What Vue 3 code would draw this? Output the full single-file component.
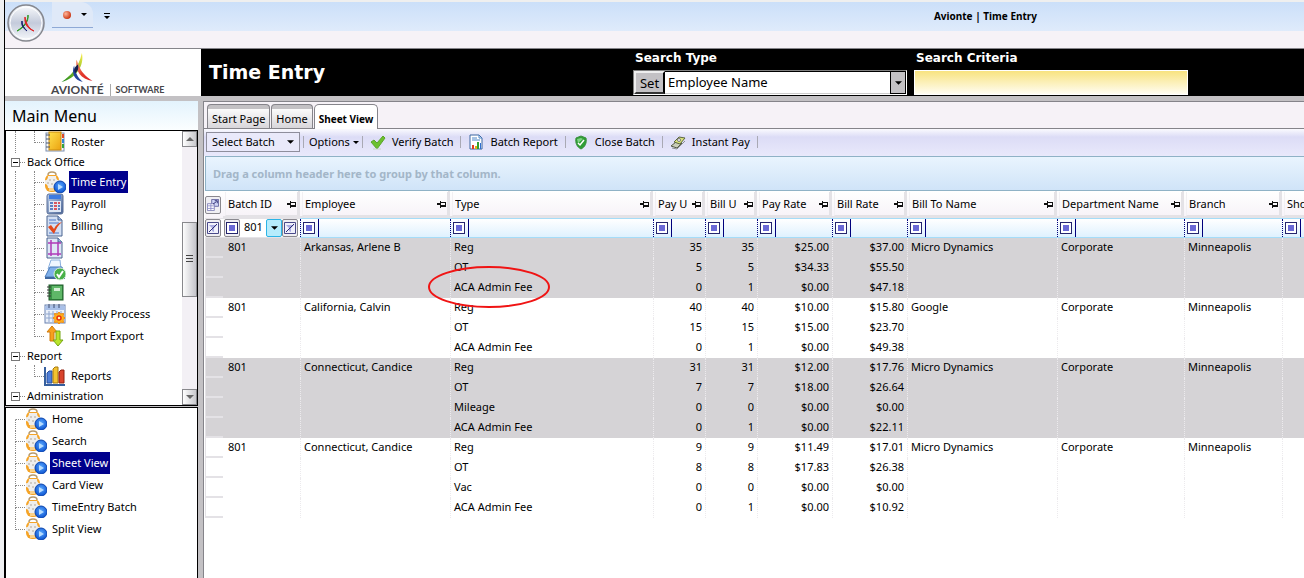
<script setup>
import { ref } from 'vue'

const batchFilter = ref('801')
const searchType = ref('Employee Name')
const criteria = ref('')

const groups = [
  { items: [{ icon: 'roster', label: 'Roster' }] },
  {
    title: 'Back Office',
    items: [
      { icon: 'entry', label: 'Time Entry', active: true },
      { icon: 'payroll', label: 'Payroll' },
      { icon: 'billing', label: 'Billing' },
      { icon: 'invoice', label: 'Invoice' },
      { icon: 'paycheck', label: 'Paycheck' },
      { icon: 'ar', label: 'AR' },
      { icon: 'weekly', label: 'Weekly Process' },
      { icon: 'transfer', label: 'Import Export' }
    ]
  },
  { title: 'Report', items: [{ icon: 'reports', label: 'Reports' }] },
  { title: 'Administration', items: [] }
]

const views = ['Home', 'Search', 'Sheet View', 'Card View', 'TimeEntry Batch', 'Split View']
const tabs = ['Start Page', 'Home', 'Sheet View']

const tools = [
  { icon: 'check', label: 'Verify Batch' },
  { icon: 'chart', label: 'Batch Report' },
  { icon: 'shield', label: 'Close Batch' },
  { icon: 'money', label: 'Instant Pay' }
]

const columns = [
  { key: 'batch', label: 'Batch ID', width: 77 },
  { key: 'employee', label: 'Employee', width: 150 },
  { key: 'type', label: 'Type', width: 203 },
  { key: 'payU', label: 'Pay U', width: 52, num: true },
  { key: 'billU', label: 'Bill U', width: 52, num: true },
  { key: 'payRate', label: 'Pay Rate', width: 75, num: true },
  { key: 'billRate', label: 'Bill Rate', width: 75, num: true },
  { key: 'billTo', label: 'Bill To Name', width: 150 },
  { key: 'dept', label: 'Department Name', width: 127 },
  { key: 'branch', label: 'Branch', width: 98 },
  { key: 'sho', label: 'Sho', width: 75 }
]

const batches = [
  {
    employee: 'Arkansas, Arlene B',
    billTo: 'Micro Dynamics',
    lines: [
      ['Reg', 35, 35, '$25.00', '$37.00'],
      ['OT', 5, 5, '$34.33', '$55.50'],
      ['ACA Admin Fee', 0, 1, '$0.00', '$47.18', true]
    ]
  },
  {
    employee: 'California, Calvin',
    billTo: 'Google',
    lines: [
      ['Reg', 40, 40, '$10.00', '$15.80'],
      ['OT', 15, 15, '$15.00', '$23.70'],
      ['ACA Admin Fee', 0, 1, '$0.00', '$49.38']
    ]
  },
  {
    employee: 'Connecticut, Candice',
    billTo: 'Micro Dynamics',
    lines: [
      ['Reg', 31, 31, '$12.00', '$17.76'],
      ['OT', 7, 7, '$18.00', '$26.64'],
      ['Mileage', 0, 0, '$0.00', '$0.00'],
      ['ACA Admin Fee', 0, 1, '$0.00', '$22.11']
    ]
  },
  {
    employee: 'Connecticut, Candice',
    billTo: 'Micro Dynamics',
    lines: [
      ['Reg', 9, 9, '$11.49', '$17.01'],
      ['OT', 8, 8, '$17.83', '$26.38'],
      ['Vac', 0, 0, '$0.00', '$0.00'],
      ['ACA Admin Fee', 0, 1, '$0.00', '$10.92']
    ]
  }
]

// one table row per pay line, the batch data only stands on the first one
const rows = batches.flatMap((b, bi) =>
  b.lines.map((l, li) => ({
    shaded: bi % 2 === 0,
    circled: l[5],
    batch: li ? '' : '801',
    employee: li ? '' : b.employee,
    type: l[0],
    payU: l[1],
    billU: l[2],
    payRate: l[3],
    billRate: l[4],
    billTo: li ? '' : b.billTo,
    dept: li ? '' : 'Corporate',
    branch: li ? '' : 'Minneapolis'
  }))
)
</script>

<template>
  <svg class="sprite" aria-hidden="true">
    <defs>
      <linearGradient id="gGreen" x1="0" y1="1" x2="1" y2="0">
        <stop offset="0" stop-color="#1d8a1d" /><stop offset=".55" stop-color="#7db928" /><stop offset="1" stop-color="#fff04a" />
      </linearGradient>
      <linearGradient id="gRed" x1="0" y1="0" x2="1" y2="1">
        <stop offset="0" stop-color="#f7b090" /><stop offset=".5" stop-color="#e43a2c" /><stop offset="1" stop-color="#d81e28" />
      </linearGradient>
      <linearGradient id="gSteel" x1="0" y1="0" x2="1" y2="1">
        <stop offset="0" stop-color="#b9cdea" /><stop offset="1" stop-color="#4a6596" />
      </linearGradient>
      <linearGradient id="gGold" x1="0" y1="0" x2="1" y2="1">
        <stop offset="0" stop-color="#ffe14d" /><stop offset="1" stop-color="#eba210" />
      </linearGradient>
      <radialGradient id="gBlue" cx=".5" cy=".4" r=".6">
        <stop offset="0" stop-color="#58a8ff" /><stop offset="1" stop-color="#0a50cf" />
      </radialGradient>
      <radialGradient id="gBall" cx=".35" cy=".35" r=".7">
        <stop offset="0" stop-color="#ffb59a" /><stop offset="1" stop-color="#c8300c" />
      </radialGradient>
      <linearGradient id="gOrb" x1="0" y1="0" x2="0" y2="1">
        <stop offset="0" stop-color="#fafbfd" /><stop offset=".5" stop-color="#c4cbdb" /><stop offset="1" stop-color="#f8fafd" />
      </linearGradient>
    </defs>
    <symbol id="i-logo" viewBox="0 0 32 32">
      <path d="M0 31C9 25 18 16 21 1C24 14 15 27 0 31Z" fill="url(#gGreen)" />
      <path d="M15 8C19 12 16 19 32 30C20 28 14 20 15 8Z" fill="url(#gRed)" />
      <path d="M13 14C14 20 16 26 22 31C13 29 10 22 13 14Z" fill="#24449c" />
      <path d="M17 13C18 17 17 20 14 22C12 18 14 15 17 13Z" fill="#14204c" />
    </symbol>
    <symbol id="i-entry" viewBox="0 0 22 22">
      <rect x="1" y="3" width="14" height="18" rx="6" fill="#f5a427" />
      <path d="M4 4c0-4 8-4 8 0" fill="#fff" stroke="#b79a6c" stroke-width="1.500" />
      <path d="M1 9c2 1 3-2 3-4h8c0 2 1 5 3 4v4c-2 0-3 2-3 4H4c0-2-1-4-3-4Z" fill="#efeeec" />
      <path d="M5 8h2v2H5zM9 8h2v2H9zM3 11h2v2H3zM7 12h2v2H7z" fill="#cfcbc4" />
      <path d="M5 17h5v3H5z" fill="#fbd28a" />
      <circle cx="16" cy="16" r="6" fill="url(#gBlue)" stroke="#0b45ad" />
      <path d="M14 13l5 3-5 3Z" fill="#b8ddff" />
    </symbol>
    <symbol id="i-roster" viewBox="0 0 22 22">
      <rect x="2" y="2" width="18" height="18" fill="#f7f8fb" stroke="#7d8fb0" />
      <rect x="5" y="1" width="12" height="18" fill="url(#gGold)" stroke="#c98a10" />
      <path d="M18 3h2v4h-2z" fill="#e04a2a" /><path d="M18 8h2v4h-2z" fill="#2f86d8" /><path d="M18 13h2v4h-2z" fill="#34a53c" />
      <path d="M2 4h4M2 8h4M2 12h4M2 16h4" stroke="#4b5568" />
    </symbol>
    <symbol id="i-payroll" viewBox="0 0 22 22">
      <rect x="3" y="1" width="16" height="20" rx="2" fill="url(#gSteel)" stroke="#5a6f98" />
      <rect x="5" y="2" width="12" height="4" fill="#3f7be0" />
      <rect x="5" y="8" width="12" height="11" fill="#dfe7f4" />
      <path d="M6 9h3v2H6zM6 12h3v2H6zM6 15h3v2H6z" fill="#5c7fc0" />
      <path d="M10 9h3v2h-3zM10 12h3v2h-3zM10 15h3v2h-3zM14 9h2v2h-2z" fill="#d8575e" />
      <path d="M14 12h2v2h-2zM14 15h2v2h-2z" fill="#5c7fc0" />
    </symbol>
    <symbol id="i-billing" viewBox="0 0 22 22">
      <path d="M3 1h11l4 4v16H3Z" fill="#d3dff3" stroke="#4a6490" />
      <path d="M14 1v4h4" fill="#9db7e2" stroke="#4a6490" />
      <path d="M5 5h7M5 8h10M5 18h10" stroke="#4c79c8" />
      <path d="M4 12l3-2 3 4c2-4 4-6 8-7-4 3-6 7-8 12Z" fill="#e2491c" />
    </symbol>
    <symbol id="i-invoice" viewBox="0 0 22 22">
      <path d="M3 1h11l4 4v16H3Z" fill="#dfe7f6" stroke="#4a6490" />
      <path d="M14 1v4h4" fill="#9db7e2" stroke="#4a6490" />
      <path d="M7 3v16M14 5v14M4 6h13M4 17h13" stroke="#b03ab8" fill="none" stroke-width="1.500" />
    </symbol>
    <symbol id="i-paycheck" viewBox="0 0 22 22">
      <path d="M7 1h9l1 9H4Z" fill="#eef6ff" stroke="#8ab0de" />
      <path d="M1 18l5-10h12l3 10Z" fill="#7fb0ea" stroke="#4878b8" />
      <path d="M1 18h20v2H1z" fill="#3e679e" />
      <circle cx="16" cy="15" r="6" fill="#48b048" stroke="#d8efd8" />
      <path d="M13 15l2 3 4-6" fill="none" stroke="#fff" stroke-width="2" />
    </symbol>
    <symbol id="i-ar" viewBox="0 0 22 22">
      <rect x="5" y="4" width="14" height="15" fill="#3b9447" stroke="#1c5a28" />
      <rect x="8" y="5" width="10" height="13" fill="#5fb768" />
      <rect x="10" y="7" width="6" height="3" fill="#d5efd5" />
      <path d="M3 6h4M3 9h4M3 12h4M3 15h4" stroke="#3a3a3a" />
    </symbol>
    <symbol id="i-weekly" viewBox="0 0 22 22">
      <rect x="1" y="2" width="20" height="18" fill="#eaf0fa" stroke="#6a82b0" />
      <path d="M1 3h20v4H1z" fill="#a9c0e8" />
      <path d="M5 8v11M9 8v11M13 8v11M17 8v11M2 11h18M2 15h18" stroke="#8fa5cc" />
      <path d="M5 1v4M10 1v4M15 1v4" stroke="#3c4d70" />
      <path d="M15 9l1.500 2 3-.5-.5 3 2 1.500-2 1.500.5 3-3-.5-1.500 2-1.500-2-3 .5.500-3-2-1.500 2-1.500-.5-3 3 .5Z" fill="#ffb61c" stroke="#f08a10" />
      <circle cx="15" cy="15" r="2" fill="#fff3c0" stroke="#e83010" stroke-width="1.500" />
    </symbol>
    <symbol id="i-transfer" viewBox="0 0 22 22">
      <path d="M8 1l5 6h-3v9H6V7H3Z" fill="#f7a01e" stroke="#cf7a0c" />
      <path d="M14 21l-5-6h3V6h4v9h3Z" fill="#b9e42c" stroke="#74a512" />
    </symbol>
    <symbol id="i-reports" viewBox="0 0 22 22">
      <path d="M1 2v18h20" fill="none" stroke="#355f9e" stroke-width="2" />
      <path d="M3 8l2-2h3v12H3Z" fill="#4f7fd8" stroke="#274f9c" />
      <path d="M9 4l2-2h3v16H9Z" fill="#f3c231" stroke="#a87a0c" />
      <path d="M15 7l2-2h3v13h-5Z" fill="#d9432c" stroke="#8f2010" />
    </symbol>
    <symbol id="i-check" viewBox="0 0 16 16">
      <path d="M1 8l3-2 3 3 6-7 2 2-8 11Z" fill="#6cc12e" stroke="#5ba42c" />
      <path d="M3 15h8" stroke="#c9d6c4" />
    </symbol>
    <symbol id="i-chart" viewBox="0 0 16 16">
      <path d="M2 1h9l3 3v11H2Z" fill="#fff" stroke="#3c66a0" />
      <path d="M11 1v3h3M4 4h5M4 6h8" stroke="#4d86c8" fill="none" />
      <path d="M4 11h2v4H4z" fill="#e03a20" /><path d="M7 12h2v3H7z" fill="#e0b010" /><path d="M9 8h2v7H9z" fill="#2ea02e" /><path d="M12 9h1v6h-1z" fill="#2f6fd0" />
    </symbol>
    <symbol id="i-shield" viewBox="0 0 16 16">
      <path d="M3 4l5-2 5 2c1 5-1 9-5 11C4 13 2 9 3 4Z" fill="#2f9e35" stroke="#3a8f3e" />
      <path d="M4 5l4-1 2 1-5 4Z" fill="#7fd384" />
      <path d="M5 9l2 2 4-5" fill="none" stroke="#fff" stroke-width="1.500" />
    </symbol>
    <symbol id="i-money" viewBox="0 0 16 16">
      <path d="M1 12l5-4 6 1-5 5Z" fill="#c9cdb8" stroke="#545a48" />
      <path d="M4 8l5-5 6 1-5 6Z" fill="#d9e27a" stroke="#5c6640" />
      <circle cx="9" cy="6" r="1.500" fill="#fff" stroke="#777" />
      <path d="M2 14l5 1 8-8" fill="none" stroke="#8b9090" />
    </symbol>
    <symbol id="i-pin" viewBox="0 0 10 8">
      <path d="M0 3h3v2H0zM3 1h1v7H3zM4 2h5v1H4zM8 2h1v5H8zM4 5h5v2H4z" fill="#111" />
    </symbol>
    <symbol id="i-caret" viewBox="0 0 8 4"><path d="M0 0h8L4 4Z" fill="#000" /></symbol>
    <symbol id="i-nofilter" viewBox="0 0 12 12">
      <path d="M.5.5h11v11H.5z" fill="#f0f0fb" stroke="#4a4a8a" />
      <path d="M2 3h8L7 6v4L5 9V6Z" fill="#a9abe2" /><path d="M2 10L10 2" stroke="#2c2c74" />
    </symbol>
    <symbol id="i-chooser" viewBox="0 0 14 14">
      <path d="M5.500.5h8v8h-8z" fill="#cfd4f5" stroke="#5a5a98" /><path d="M.5 5.500h8v8h-8z" fill="#fff" stroke="#7a7ab4" />
      <path d="M1 8h7M1 11h7M4.500 6v7" stroke="#8a8ac8" /><path d="M7 6l4-3M9 2h3v3" stroke="#202068" fill="none" />
    </symbol>
  </svg>

  <div class="window">
    <header class="titlebar">
      <svg class="orb" viewBox="0 0 38 38">
        <circle cx="19" cy="19" r="18" fill="url(#gOrb)" stroke="#85878e" stroke-width="1.500" />
        <circle cx="19" cy="19" r="16" fill="none" stroke="#fff" />
        <path d="M10 27C16 23 21 18 21 11C22 17 17 24 10 27Z" fill="#2c9a24" stroke="#2c9a24" />
        <path d="M18 13C19 19 21 24 27 27C21 25 17 20 18 13Z" fill="#e02424" stroke="#e02424" />
        <path d="M15 17C15 21 17 24 20 27C16 24 14 21 15 17Z" fill="#15206e" stroke="#15206e" />
      </svg>
      <div class="quick">
        <svg class="ball" viewBox="0 0 8 8"><circle cx="4" cy="4" r="4" fill="url(#gBall)" /></svg>
        <svg class="mini"><use href="#i-caret" /></svg>
      </div>
      <svg class="more" viewBox="0 0 6 7"><path d="M0 0h6v1H0zM0 3h6L3 6Z" fill="#000" /></svg>
      <span class="caption">Avionte | Time Entry</span>
    </header>

    <div class="banner">
      <div class="brand">
        <svg class="mark"><use href="#i-logo" /></svg>
        <div class="names"><b>AVIONTÉ</b><small>SOFTWARE</small></div>
      </div>
      <div class="search">
        <h1>Time Entry</h1>
        <div class="field">
          <label for="stype">Search Type</label>
          <div class="combo">
            <button type="button" class="set">Set</button>
            <select id="stype" v-model="searchType"><option>Employee Name</option></select>
            <span class="drop"><svg><use href="#i-caret" /></svg></span>
          </div>
        </div>
        <div class="field">
          <label for="crit">Search Criteria</label>
          <input id="crit" v-model="criteria" class="crit" type="text">
        </div>
      </div>
    </div>

    <div class="body">
      <aside>
        <h2>Main Menu</h2>
        <div class="menu">
          <div class="tree">
            <template v-for="(g, gi) in groups" :key="gi">
              <div v-if="g.title" class="node"><i class="toggle"></i><i class="stub"></i>{{ g.title }}</div>
              <ul>
                <li v-for="item in g.items" :key="item.label">
                  <i class="trunk"></i><i class="branch"></i>
                  <svg class="icon"><use :href="'#i-' + item.icon" /></svg>
                  <a href="#" :class="{ active: item.active }">{{ item.label }}</a>
                </li>
              </ul>
            </template>
          </div>
          <div class="scroll">
            <button type="button" aria-label="Scroll up"><svg viewBox="0 0 8 4"><path d="M0 4h8L4 0Z" /></svg></button>
            <span class="thumb"></span>
            <button type="button" aria-label="Scroll down"><svg viewBox="0 0 8 4"><path d="M0 0h8L4 4Z" /></svg></button>
          </div>
        </div>
        <ul class="views">
          <li v-for="v in views" :key="v">
            <i class="branch"></i>
            <svg class="icon"><use href="#i-entry" /></svg>
            <a href="#" :class="{ active: v === 'Sheet View' }">{{ v }}</a>
          </li>
        </ul>
      </aside>

      <main>
        <nav class="tabs">
          <button v-for="t in tabs" :key="t" type="button" :class="{ current: t === 'Sheet View' }">{{ t }}</button>
        </nav>
        <div class="toolbar">
          <div class="picker">
            <select aria-label="Select Batch"><option>Select Batch</option></select>
            <svg><use href="#i-caret" /></svg>
          </div>
          <button type="button" class="options">Options <svg class="mini"><use href="#i-caret" /></svg></button>
          <button v-for="t in tools" :key="t.label" type="button">
            <svg class="tool"><use :href="'#i-' + t.icon" /></svg>{{ t.label }}
          </button>
        </div>
        <div class="groupby">Drag a column header here to group by that column.</div>

        <div class="sheet">
          <table>
            <colgroup>
              <col class="selector">
              <col v-for="c in columns" :key="c.key" :style="{ width: c.width + 'px' }">
            </colgroup>
            <thead>
              <tr class="heads">
                <th class="corner"><button type="button" class="tile" aria-label="Choose columns"><svg><use href="#i-chooser" /></svg></button></th>
                <th v-for="c in columns" :key="c.key">
                  <div class="head"><span>{{ c.label }}</span><svg v-if="c.key !== 'sho'"><use href="#i-pin" /></svg></div>
                </th>
              </tr>
              <tr class="filters">
                <td class="corner"><button type="button" class="tile" aria-label="Clear filters"><svg><use href="#i-nofilter" /></svg></button></td>
                <td v-for="c in columns" :key="c.key" :class="{ editing: c.key === 'batch' }">
                  <div v-if="c.key === 'batch'" class="edit">
                    <button type="button" class="tile" aria-label="Operator"><i class="op"></i></button>
                    <input v-model="batchFilter" type="text" aria-label="Batch ID filter">
                    <button type="button" class="tile hot" aria-label="Values"><svg><use href="#i-caret" /></svg></button>
                    <button type="button" class="tile" aria-label="Clear"><svg><use href="#i-nofilter" /></svg></button>
                  </div>
                  <div v-else class="filter"><button type="button" :aria-label="c.label + ' operator'"><i class="op"></i></button></div>
                </td>
              </tr>
            </thead>
            <tbody>
              <tr v-for="(r, ri) in rows" :key="ri" :class="{ shaded: r.shaded }">
                <td class="handle"></td>
                <td v-for="c in columns" :key="c.key" :class="{ num: c.num }">
                  {{ r[c.key] }}
                  <svg v-if="r.circled && c.key === 'type'" class="ring" viewBox="0 0 122 42">
                    <ellipse cx="61" cy="21" rx="60" ry="20" />
                  </svg>
                </td>
              </tr>
            </tbody>
          </table>
        </div>
      </main>
    </div>
  </div>
</template>

<style>
body {
  margin: 0;
  background: #eff0f2;
}
</style>

<style scoped>
* {
  box-sizing: border-box;
}

button,
input,
select {
  font: inherit;
  color: inherit;
  margin: 0;
  padding: 0;
  border: 0;
  background: none;
  border-radius: 0;
  appearance: none;
}

ul {
  list-style: none;
  margin: 0;
  padding: 0;
}

.sprite {
  position: absolute;
  width: 0;
  height: 0;
}

.window {
  min-height: 100vh;
  margin-left: 4px;
  border-left: 1px solid #000;
  display: flex;
  flex-direction: column;
  overflow: hidden;
  background: #c3c1c4;
  font-family: "Noto Sans", sans-serif;
  font-size: 11px;
  line-height: 16px;
  color: #000;
}

.titlebar {
  height: 49px;
  display: flex;
  align-items: flex-start;
  border-top: 2px solid #efefef;
  border-bottom: 1px solid #85848a;
  background: linear-gradient(#cbdff9, #dfebfb 29px, #f6f2f7 29px);
}

.orb {
  width: 38px;
  height: 38px;
  margin: 2px 7px 0 2px;
}

.quick {
  display: flex;
  align-items: center;
  gap: 10px;
  height: 26px;
  padding: 0 6px 0 11px;
  border-bottom: 1px solid #8ea9d6;
  background: #dfe9f8;
  border-radius: 0 12px 0 0;
}

.ball {
  width: 8px;
  height: 8px;
}

.mini {
  width: 6px;
  height: 3px;
}

.more {
  width: 6px;
  height: 7px;
  margin: 11px 0 0 11px;
}

.caption {
  margin: 6px 267px 0 auto;
  font-weight: 700;
  font-size: 10px;
}

.banner {
  display: flex;
  height: 47px;
  background: #000;
}

.brand {
  width: 196px;
  background: #fff;
}

.mark {
  display: block;
  width: 32px;
  height: 31px;
  margin: 3px 0 0 56px;
}

.names {
  display: flex;
  align-items: center;
  gap: 6px;
  height: 13px;
  margin-left: 46px;
  font-family: Lato, sans-serif;
  color: #46464a;
}

.names b {
  font-size: 12px;
}

.names small {
  border-left: 1px solid #aaa;
  padding-left: 5px;
  line-height: 12px;
  font-size: 9px;
  font-weight: 700;
}

.search {
  flex: 1;
  display: flex;
  gap: 7px;
  color: #fff;
}

h1 {
  width: 425px;
  margin: 0;
  padding-left: 8px;
  font-family: "DejaVu Sans", sans-serif;
  font-size: 19px;
  line-height: 47px;
}

.field {
  width: 274px;
}

.field label {
  display: block;
  padding: 0 2px;
  font-family: "DejaVu Sans", sans-serif;
  font-size: 12px;
  line-height: 18px;
  font-weight: 700;
  height: 21px;
}

.combo {
  display: flex;
  height: 25px;
  border: 1px solid #808080;
  border-right-color: #fff;
  border-bottom-color: #fff;
  background: #fff;
  color: #000;
  font-size: 13px;
}

.set {
  width: 31px;
  border: 2px solid #fff;
  border-color: #eee #000 #333 #eee;
  background: #c3c1c4;
  line-height: 16px;
}

.combo select {
  flex: 1;
  padding: 0 0 2px 3px;
  border-top: 1px solid #000;
  border-bottom: 1px solid #ccc;
}

.drop {
  width: 16px;
  display: grid;
  place-items: center;
  background: #c3c1c4;
  border: 1px solid #000;
}

.drop svg {
  width: 7px;
  height: 4px;
}

.crit {
  width: 100%;
  height: 25px;
  padding: 0 4px;
  border: 1px solid #fff;
  background: linear-gradient(#f8e380, #fffdf2);
  color: #000;
}

.body {
  flex: 1;
  display: flex;
  padding-top: 5px;
}

aside {
  width: 193px;
  margin-right: 5px;
  flex: none;
  display: flex;
  flex-direction: column;
}

h2 {
  margin: 0;
  height: 29px;
  padding-left: 7px;
  font-size: 16px;
  line-height: 30px;
  font-weight: 400;
  background: linear-gradient(#e3f3fd, #fbfeff);
}

.menu {
  display: flex;
  border: 1px solid #000;
  background: #fff;
}

.tree {
  flex: 1;
}

.node {
  display: flex;
  align-items: center;
  height: 18px;
  padding-left: 5px;
}

.toggle {
  width: 9px;
  height: 9px;
  border: 1px solid #777;
  background: linear-gradient(#000, #000) center / 5px 1px no-repeat #fff;
}

.stub {
  width: 5px;
  margin-right: 2px;
  border-top: 1px dotted #888;
}

li {
  display: flex;
  align-items: center;
  height: 22px;
}

.trunk {
  width: 19px;
  height: 22px;
  margin-left: 9px;
  border-left: 1px dotted #888;
}

.branch {
  width: 10px;
  height: 22px;
}

.branch::before,
.branch::after {
  content: "";
  display: block;
  height: 11px;
  border-left: 1px dotted #888;
}

.branch::before {
  border-bottom: 1px dotted #888;
}

li:last-child .branch::after {
  border-left-color: transparent;
}

.icon {
  width: 22px;
  height: 22px;
}

li a {
  margin-left: 3px;
  padding: 0 2px;
  line-height: 22px;
  color: #000;
  text-decoration: none;
}

li a.active {
  background: #00008c;
  color: #fff;
}

.scroll {
  width: 15px;
  display: flex;
  flex-direction: column;
  background: #f3f0f5;
}

.scroll button {
  height: 16px;
  display: grid;
  place-items: center;
  border: 1px solid #88888c;
  background: linear-gradient(90deg, #fff, #c8c8cc);
}

.scroll svg {
  width: 8px;
  height: 4px;
  fill: #666;
}

.thumb {
  height: 75px;
  margin: 75px 0 auto;
  border: 1px solid #88888c;
  background:
    repeating-linear-gradient(#444 0 1px, transparent 1px 3px) center / 7px 9px no-repeat,
    linear-gradient(90deg, #fdfdfd, #c4c4ca);
}

.views {
  flex: 1;
  margin-top: 1px;
  border: 1px solid #000;
  border-bottom: 0;
  background: #fff;
}

.views .branch {
  margin-left: 9px;
}

.views li:first-child .branch::before {
  border-left-color: transparent;
}

main {
  flex: 1;
  min-width: 0;
  border: 1px solid #85848a;
  border-width: 1px 0 0 1px;
  background: #fff;
}

.tabs {
  display: flex;
  align-items: flex-end;
  gap: 1px;
  height: 27px;
  padding-left: 3px;
  border-bottom: 1px solid #85848a;
  background: #f6f2f7;
}

.tabs button {
  height: 24px;
  padding: 4px 4px 0;
  border: 1px solid #85848a;
  border-bottom: 0;
  border-radius: 4px 4px 0 0;
  background: linear-gradient(#c3c1c4 4px, #fbfbfb 4px, #d8d6da);
}

.tabs .current {
  height: 25px;
  margin-bottom: -1px;
  padding: 3px 4px 0;
  border-radius: 5px 5px 0 0;
  background: #fff;
  font-weight: 700;
  font-size: 10px;
}

.toolbar {
  display: flex;
  align-items: center;
  height: 27px;
  padding: 0 0 1px 2px;
  background: linear-gradient(#fafafe, #dcdcf6 8px, #e9e9fb);
}

.toolbar > button {
  display: flex;
  align-items: center;
  height: 12px;
  padding: 0 7px;
  border-right: 1px solid #a9a9b4;
}

.toolbar .options {
  gap: 3px;
  margin-left: 3px;
  padding: 0 3px 0 5px;
  border-left: 1px solid #a9a9b4;
}

.tool {
  width: 16px;
  height: 16px;
  margin-right: 6px;
}

.picker {
  display: flex;
  align-items: center;
  width: 94px;
  height: 20px;
  padding-right: 5px;
  border: 1px solid #8e8e9c;
  background: #e9e9fa;
}

.picker select {
  flex: 1;
  padding-left: 5px;
}

.picker svg {
  width: 7px;
  height: 4px;
}

.groupby {
  height: 35px;
  margin: 0 0 0 1px;
  padding-left: 7px;
  border: 1px solid #8fb2c6;
  border-right: 0;
  background: linear-gradient(#e9f4fe, #d0e4f8);
  line-height: 34px;
  font-weight: 700;
  color: #a3b6c8;
}

.sheet {
  overflow: hidden;
  padding-left: 1px;
}

table {
  width: 1152px;
  table-layout: fixed;
  border-collapse: separate;
  border-spacing: 0;
}

.selector {
  width: 18px;
}

th,
td {
  padding: 0;
  font-weight: 400;
  text-align: left;
}

.heads th {
  height: 27px;
  border-right: 2px solid #e4e2e6;
  border-bottom: 2px solid #e4e2e6;
  background: linear-gradient(#fff, #f7f3f8);
}

.heads .corner {
  border: 0;
}

.head {
  display: flex;
  align-items: center;
  height: 24px;
  margin-left: 2px;
  padding: 2px 0 0 2px;
  border: 1px solid #e4e2e6;
  border-top: 0;
  border-left-color: #f2f0f3;
}

.head span {
  flex: 1;
  overflow: hidden;
  white-space: nowrap;
}

.head svg {
  flex: none;
  width: 10px;
  height: 8px;
}

.tile {
  display: grid;
  place-items: center;
  flex: none;
  width: 16px;
  height: 18px;
  border: 1px solid #8a888e;
  border-radius: 2px;
  background: #f0eff3;
}

.tile svg {
  width: 12px;
  height: 12px;
}

.tile.hot {
  border-color: #2cb4e6;
  background: #b6ecfc;
}

.tile.hot svg {
  width: 7px;
  height: 4px;
}

.filters td {
  height: 19px;
  border: 1px solid #a5dcf8;
  border-width: 1px 0;
  background: linear-gradient(#fff, #dff1fe);
}

.filters .corner,
.filters .editing {
  border-color: #e4e2e6;
  background: #fff;
}

.edit,
.filter {
  display: flex;
  align-items: center;
  height: 18px;
}

.edit {
  padding: 0 2px 0 1px;
}

.edit input {
  flex: 1;
  min-width: 0;
  height: 16px;
  padding: 0 0 2px 4px;
}

.filter {
  border-left: 1px dotted #00007c;
}

.filter button {
  height: 18px;
  padding: 0 3px 0 2px;
  border-right: 1px solid #00007c;
}

.op {
  display: block;
  width: 12px;
  height: 12px;
  border: 1px solid #25256e;
  background: linear-gradient(#6a69d6, #6a69d6) center / 6px 6px no-repeat #fff;
}

tbody td {
  position: relative;
  height: 20px;
  padding: 0 3px 2px;
  border-left: 1px dotted #eceaed;
  white-space: nowrap;
}

tbody .handle {
  background: #fff;
  border-left: 1px solid #e4e2e6;
  border-bottom: 2px solid #e4e2e6;
}

tbody .handle + td {
  padding-left: 4px;
  border-left-style: solid;
  border-left-color: transparent;
}

.shaded td {
  background: #d5d3d6;
}

.num {
  text-align: right;
}

.ring {
  position: absolute;
  z-index: 1;
  left: -23px;
  top: -12px;
  width: 122px;
  height: 42px;
  overflow: visible;
}

.ring ellipse {
  fill: none;
  stroke: #f01414;
  stroke-width: 2;
}
</style>
